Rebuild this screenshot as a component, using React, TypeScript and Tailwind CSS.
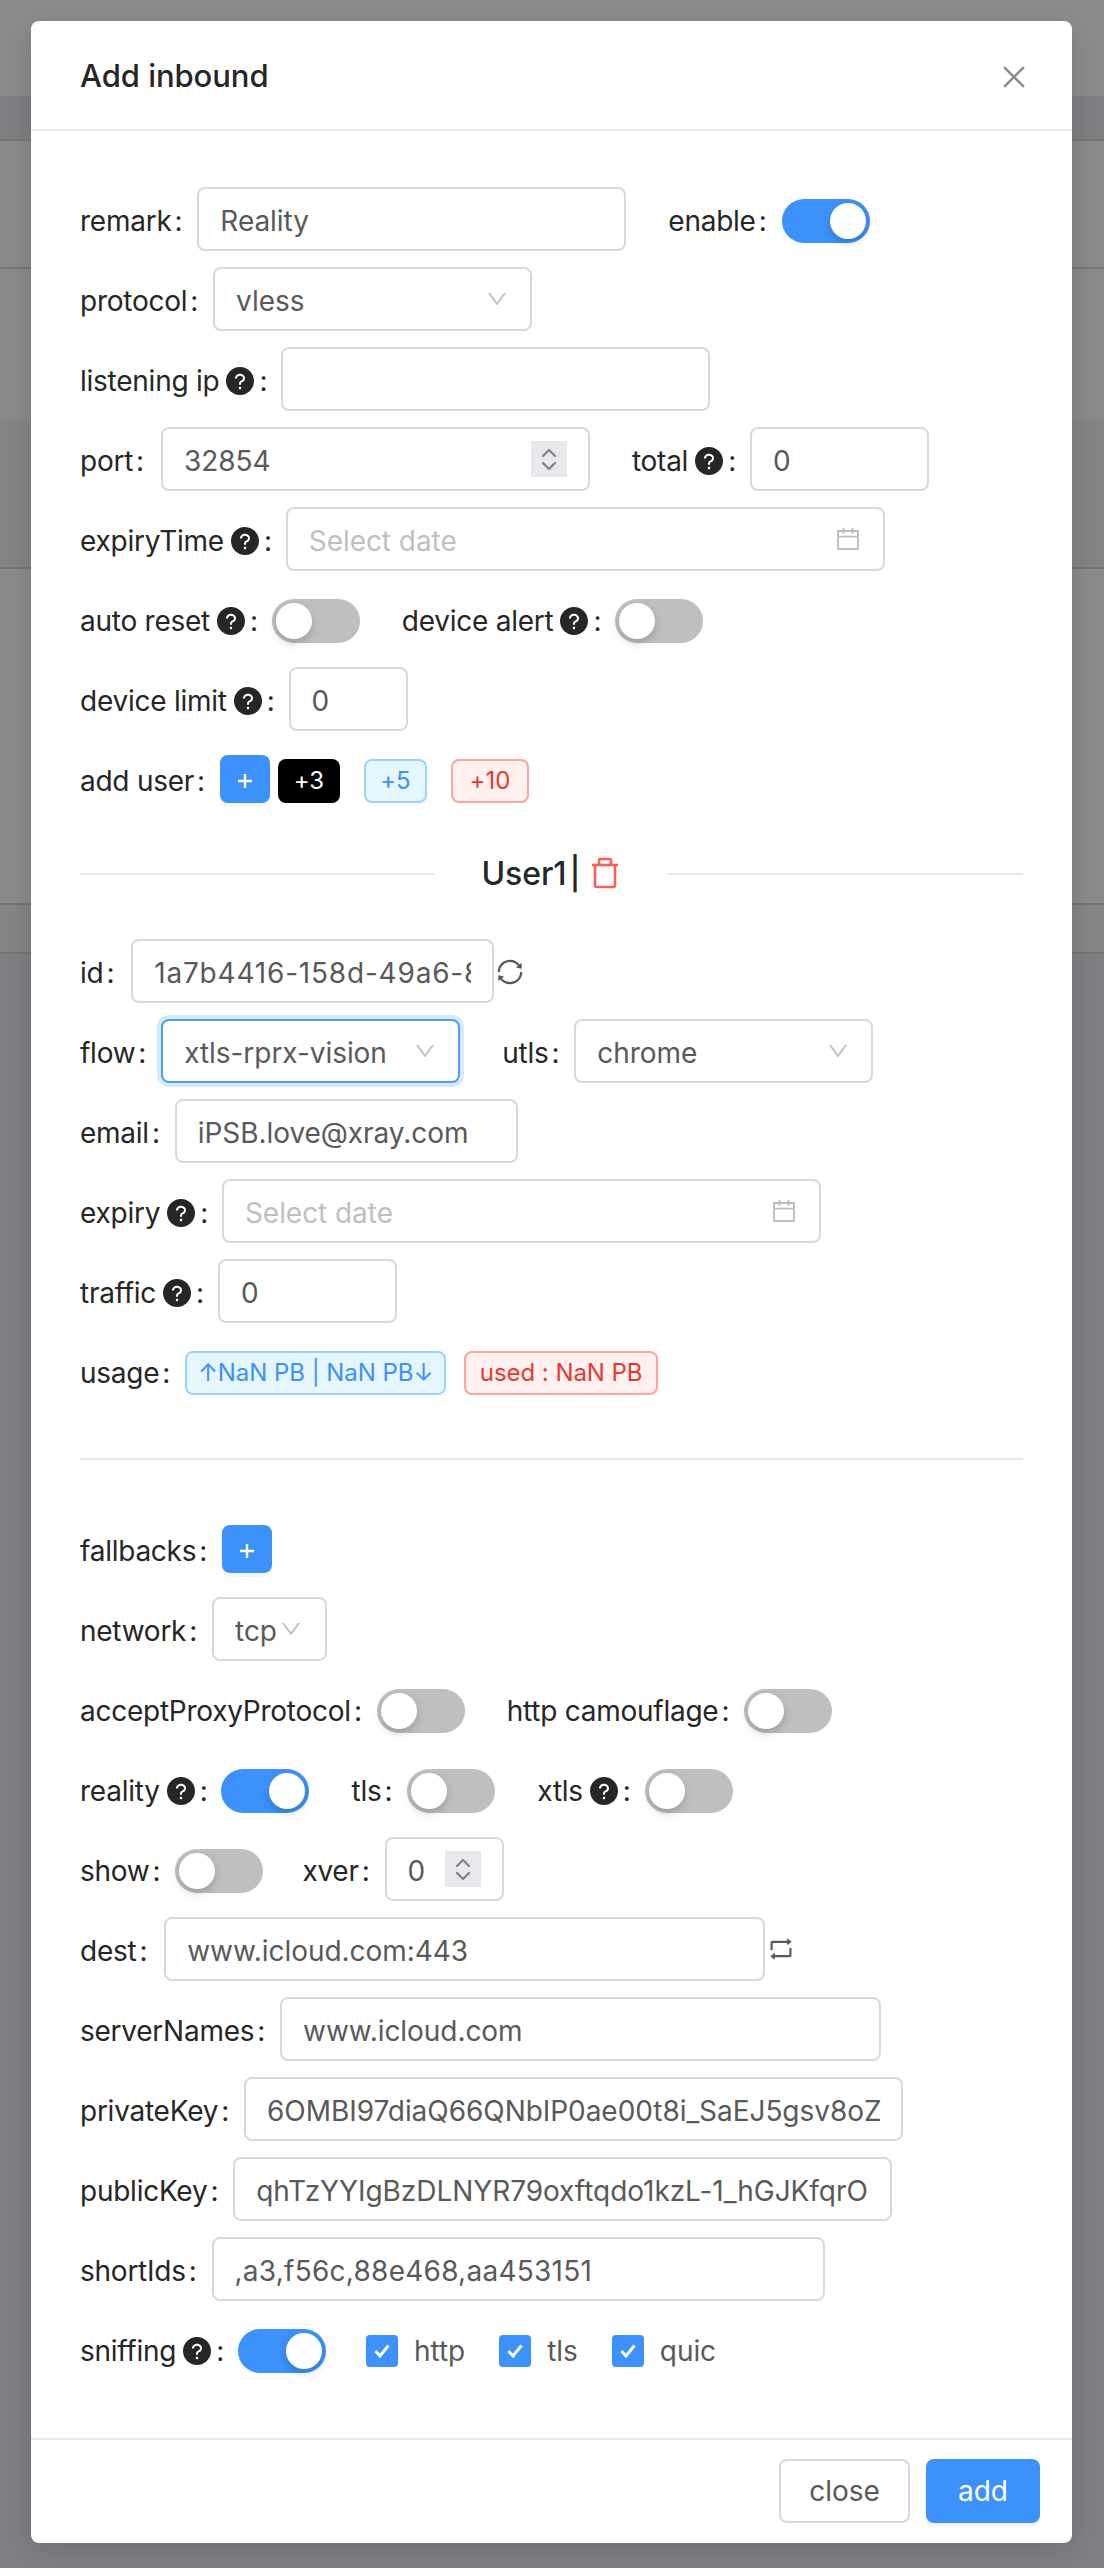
import type { ReactNode } from "react";
import {
  AiFillQuestionCircle,
  AiOutlineCalendar,
  AiOutlineClose,
  AiOutlineDown,
  AiOutlineRetweet,
  AiOutlineSync,
} from "react-icons/ai";

const Row = ({ children }: { children: ReactNode }) => (
  <div className="flex items-center h-[64px] mb-4">{children}</div>
);

const Label = ({ text, help }: { text: string; help?: boolean }) => (
  <div className="flex items-center whitespace-nowrap text-[#262626] translate-y-[2px] tracking-[-0.25px]">
    <span>{text}</span>
    {help && <AiFillQuestionCircle className="ml-[5px] text-[32px] text-[#262626]" />}
    <span className={help ? "ml-[3px] mr-[14px]" : "ml-[3px] mr-[15px]"}>:</span>
  </div>
);

const Box = ({
  width,
  children,
  focused,
}: {
  width: string;
  children?: ReactNode;
  focused?: boolean;
}) => (
  <div
    className={`${width} h-[64px] flex items-center px-[21px] rounded-lg border-2 bg-white text-[#595959] ${
      focused
        ? "border-[#4a9ffb] shadow-[0_0_0_4px_#d9e9fd]"
        : "border-[#d9d9d9]"
    }`}
  >
    {children}
  </div>
);

const Value = ({ text, className = "" }: { text: string; className?: string }) => (
  <div className={`flex-1 min-w-0 whitespace-nowrap translate-y-[2px] ${className}`}>
    {text}
  </div>
);

const Select = ({
  width,
  text,
  focused,
}: {
  width: string;
  text: string;
  focused?: boolean;
}) => (
  <Box width={width} focused={focused}>
    <Value text={text} />
    <AiOutlineDown className="text-[24px] text-[#bfbfbf] shrink-0" />
  </Box>
);

const DateBox = ({ width }: { width: string }) => (
  <Box width={width}>
    <span className="flex-1 text-[#bfbfbf] translate-y-[2px]">Select date</span>
    <AiOutlineCalendar className="text-[28px] text-[#bfbfbf]" />
  </Box>
);

const Stepper = () => (
  <div className="w-9 h-9 bg-[#e8e8ed] flex flex-col items-center justify-center gap-[3px] shrink-0">
    <svg width="16" height="10" viewBox="0 0 16 10" fill="none">
      <path d="M2 8 L8 2 L14 8" stroke="#84848c" strokeWidth="2.4" strokeLinecap="round" strokeLinejoin="round" />
    </svg>
    <svg width="16" height="10" viewBox="0 0 16 10" fill="none">
      <path d="M2 2 L8 8 L14 2" stroke="#84848c" strokeWidth="2.4" strokeLinecap="round" strokeLinejoin="round" />
    </svg>
  </div>
);

const Toggle = ({ on }: { on?: boolean }) => (
  <div
    className={`w-[88px] h-[44px] rounded-full flex items-center px-1 shrink-0 translate-y-[2px] ${
      on ? "bg-[#3c91fb] justify-end" : "bg-[#bfbfbf] justify-start"
    }`}
  >
    <div className="w-9 h-9 rounded-full bg-white shadow-[0_4px_8px_0_rgba(0,35,11,0.2)]" />
  </div>
);

const Tag = ({ className, children }: { className: string; children: ReactNode }) => (
  <div
    className={`h-[44px] flex items-center justify-center rounded-lg border-2 text-[24px] whitespace-nowrap translate-y-[2px] ${className}`}
  >
    {children}
  </div>
);

const PlusButton = () => (
  <div className="w-[50px] h-[48px] rounded-lg bg-[#3c91fb] flex items-center justify-center shadow-[0_4px_0_rgba(0,0,0,0.04)] shrink-0">
    <svg width="18" height="18" viewBox="0 0 18 18" className="translate-y-[2px]">
      <path d="M9 2 V16 M2 9 H16" stroke="#ffffff" strokeWidth="2.4" />
    </svg>
  </div>
);

const Check = ({ text, className }: { text: string; className: string }) => (
  <div className={`flex items-center translate-y-[2px] ${className}`}>
    <div className="w-8 h-8 rounded-[4px] bg-[#3c91fb] flex items-center justify-center">
      <svg width="20" height="20" viewBox="0 0 20 20" fill="none">
        <path d="M3.5 10 L8 15 L16.5 4.5" stroke="#ffffff" strokeWidth="3" />
      </svg>
    </div>
    <span className="ml-4 text-[#595959]">{text}</span>
  </div>
);

const TrashIcon = () => (
  <svg width="30" height="32" viewBox="0 0 30 32" fill="none" stroke="#f5605a" strokeWidth="2.6" className="ml-[9px] -mt-[2px]">
    <path d="M2 8 H28" />
    <path d="M9 8 V3 Q9 2 10 2 H20 Q21 2 21 3 V8" />
    <path d="M5 8 V28 Q5 30 7 30 H23 Q25 30 25 28 V8" />
  </svg>
);

const Divider = () => <div className="h-[2px] bg-[#e8e8e8]" />;

export default function App() {
  return (
    <div className="relative w-[1104px] h-[2568px] overflow-hidden bg-[#808184] font-['Inter',sans-serif] text-[28px] tracking-[-0.05px]">
      {/* Page behind the overlay */}
      <div className="flex flex-col">
        <div className="h-[96px] bg-[#8c8c8c]" />
        <div className="h-[45px] bg-[#7f8083] border-b-2 border-[#767676]" />
        <div className="h-[128px] bg-[#8b8b8b] border-b-2 border-[#767676]" />
        <div className="h-[150px] bg-[#8b8b8b]" />
        <div className="h-[150px] bg-[#858585] border-b-2 border-[#767676]" />
        <div className="h-[336px] bg-[#8b8b8b] border-b-2 border-[#767676]" />
        <div className="h-[49px] bg-[#868686] border-b-2 border-[#767676]" />
      </div>

      {/* Modal */}
      <div className="absolute left-[31px] top-[21px] w-[1041px] h-[2522px] bg-white rounded-lg shadow-[0_8px_32px_rgba(0,0,0,0.15)] flex flex-col">
        <div className="h-[110px] px-[49px] flex items-center justify-between border-b-2 border-[#e8e8e8] shrink-0">
          <div className="text-[31px] font-medium text-[#262626] translate-y-[1px]">Add inbound</div>
          <AiOutlineClose className="text-[32px] text-[#8c8c8c] -mr-[7px] translate-y-[2px]" />
        </div>

        <div className="flex-1 px-[49px] pt-[56px]">
          <Row>
            <Label text="remark" />
            <Box width="w-[429px]"><Value text="Reality" /></Box>
            <div className="ml-[42px]"><Label text="enable" /></div>
            <Toggle on />
          </Row>
          <Row>
            <Label text="protocol" />
            <Select width="w-[319px]" text="vless" />
          </Row>
          <Row>
            <Label text="listening ip" help />
            <Box width="w-[429px]" />
          </Row>
          <Row>
            <Label text="port" />
            <div className="ml-[2px]">
              <Box width="w-[429px]">
                <Value text="32854" />
                <Stepper />
              </Box>
            </div>
            <div className="ml-[42px]"><Label text="total" help /></div>
            <Box width="w-[179px]"><Value text="0" /></Box>
          </Row>
          <Row>
            <Label text="expiryTime" help />
            <DateBox width="w-[599px]" />
          </Row>
          <Row>
            <Label text="auto reset" help />
            <Toggle />
            <div className="ml-[42px]"><Label text="device alert" help /></div>
            <Toggle />
          </Row>
          <Row>
            <Label text="device limit" help />
            <Box width="w-[119px]"><Value text="0" /></Box>
          </Row>
          <Row>
            <Label text="add user" />
            <PlusButton />
            <Tag className="ml-2 w-[62px] bg-black border-black text-white">+3</Tag>
            <Tag className="ml-6 w-[63px] bg-[#e6f6ff] border-[#9bd3ff] text-[#3c91fb]">+5</Tag>
            <Tag className="ml-6 w-[78px] bg-[#fff1f0] border-[#ffa39e] text-[#e8392f]">+10</Tag>
          </Row>

          {/* User divider */}
          <div className="flex items-center h-[48px] mt-[39px] mb-[41px]">
            <div className="w-[354px] h-[2px] bg-[#e8e8e8]" />
            <div className="flex-1 flex items-center justify-center text-[32px] font-medium text-[#262626]">
              <span>User1</span>
              <span className="ml-[3px]">|</span>
              <TrashIcon />
            </div>
            <div className="w-[356px] h-[2px] bg-[#e8e8e8]" />
          </div>

          <Row>
            <Label text="id" />
            <div className="ml-[2px]">
              <Box width="w-[363px]">
                <Value text="1a7b4416-158d-49a6-8e4c-3b2f" className="overflow-hidden tracking-[0.8px]" />
              </Box>
            </div>
            <AiOutlineSync className="ml-[1px] text-[30px] text-[#595959] translate-y-[1px]" />
          </Row>
          <Row>
            <Label text="flow" />
            <Select width="w-[299px]" text="xtls-rprx-vision" focused />
            <div className="ml-[42px]"><Label text="utls" /></div>
            <Select width="w-[299px]" text="chrome" />
          </Row>
          <Row>
            <Label text="email" />
            <Box width="w-[343px]"><Value text="iPSB.love@xray.com" /></Box>
          </Row>
          <Row>
            <Label text="expiry" help />
            <DateBox width="w-[599px]" />
          </Row>
          <Row>
            <Label text="traffic" help />
            <Box width="w-[179px]"><Value text="0" /></Box>
          </Row>
          <Row>
            <Label text="usage" />
            <Tag className="w-[261px] bg-[#e6f6ff] border-[#9bd3ff] text-[#3c91fb]">↑NaN PB | NaN PB↓</Tag>
            <Tag className="ml-[18px] w-[194px] bg-[#fff1f0] border-[#ffa39e] text-[#e8392f]">used : NaN PB</Tag>
          </Row>

          <div className="mt-[55px] mb-[57px]"><Divider /></div>

          <Row>
            <Label text="fallbacks" />
            <PlusButton />
          </Row>
          <Row>
            <Label text="network" />
            <Box width="w-[115px]">
              <span className="translate-y-[2px]">tcp</span>
              <AiOutlineDown className="text-[24px] text-[#bfbfbf] ml-[2px] shrink-0" />
            </Box>
          </Row>
          <Row>
            <Label text="acceptProxyProtocol" />
            <Toggle />
            <div className="ml-[42px]"><Label text="http camouflage" /></div>
            <Toggle />
          </Row>
          <Row>
            <Label text="reality" help />
            <Toggle on />
            <div className="ml-[42px]"><Label text="tls" /></div>
            <Toggle />
            <div className="ml-[42px]"><Label text="xtls" help /></div>
            <Toggle />
          </Row>
          <Row>
            <Label text="show" />
            <Toggle />
            <div className="ml-[39px]"><Label text="xver" /></div>
            <Box width="w-[119px]">
              <Value text="0" />
              <Stepper />
            </Box>
          </Row>
          <Row>
            <Label text="dest" />
            <div className="ml-[2px]">
              <Box width="w-[601px]"><Value text="www.icloud.com:443" /></Box>
            </div>
            <AiOutlineRetweet className="ml-[2px] text-[28px] text-[#595959]" />
          </Row>
          <Row>
            <Label text="serverNames" />
            <Box width="w-[601px]"><Value text="www.icloud.com" /></Box>
          </Row>
          <Row>
            <Label text="privateKey" />
            <Box width="w-[659px]"><Value text="6OMBI97diaQ66QNbIP0ae00t8i_SaEJ5gsv8oZ" /></Box>
          </Row>
          <Row>
            <Label text="publicKey" />
            <Box width="w-[659px]"><Value text="qhTzYYIgBzDLNYR79oxftqdo1kzL-1_hGJKfqrO" /></Box>
          </Row>
          <Row>
            <Label text="shortIds" />
            <Box width="w-[613px]"><Value text=",a3,f56c,88e468,aa453151" className="tracking-[0.25px]" /></Box>
          </Row>
          <Row>
            <Label text="sniffing" help />
            <Toggle on />
            <Check text="http" className="ml-10" />
            <Check text="tls" className="ml-[34px]" />
            <Check text="quic" className="ml-[34px]" />
          </Row>
        </div>

        <div className="h-[105px] border-t-2 border-[#e8e8e8] shrink-0 flex items-start justify-end gap-4 pt-[19px] pr-[32px]">
          <div className="w-[131px] h-[64px] rounded-lg border-2 border-[#d9d9d9] bg-white text-[#595959] flex items-center justify-center">
            close
          </div>
          <div className="w-[114px] h-[64px] rounded-lg bg-[#3c91fb] text-white flex items-center justify-center shadow-[0_4px_0_rgba(0,0,0,0.04)]">
            add
          </div>
        </div>
      </div>
    </div>
  );
}
